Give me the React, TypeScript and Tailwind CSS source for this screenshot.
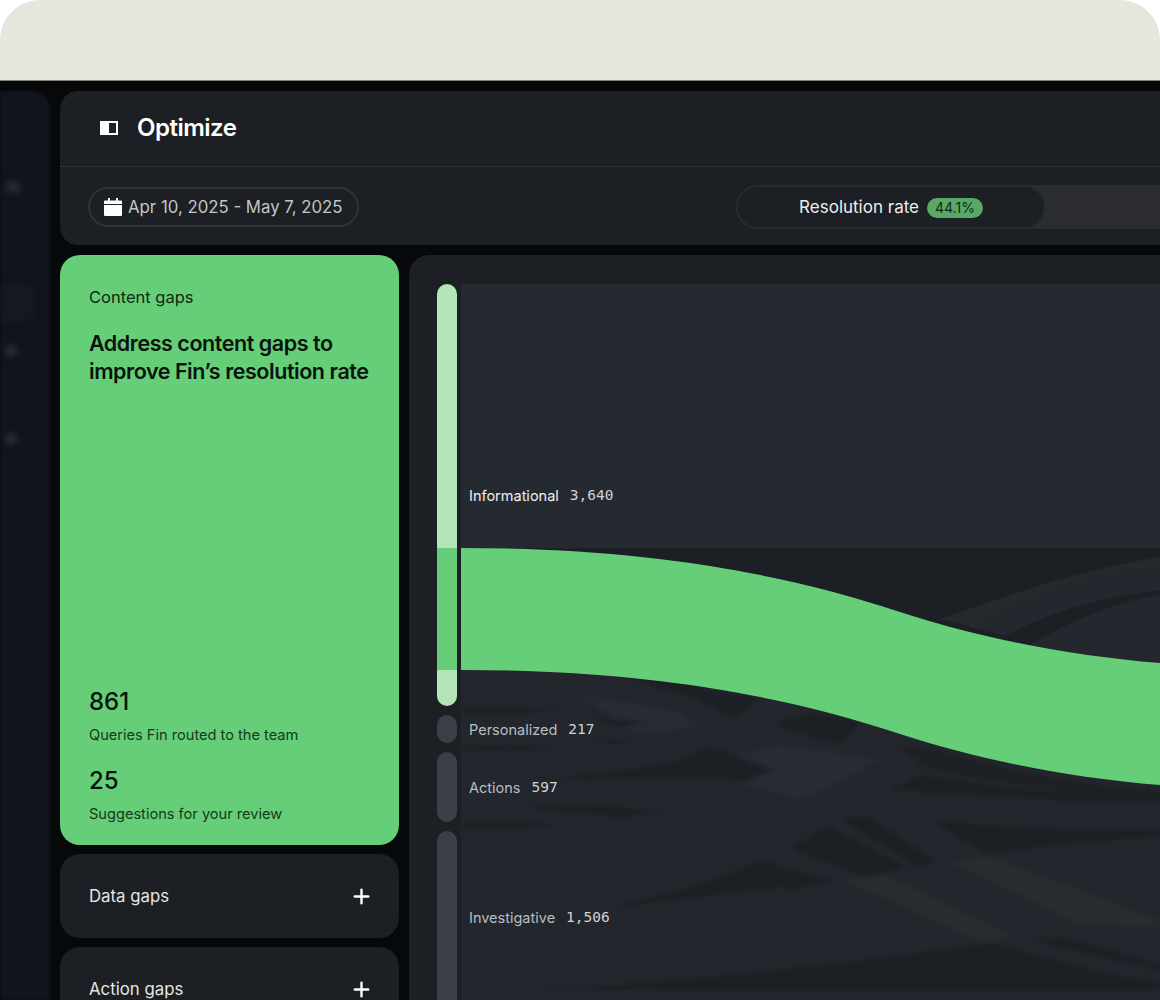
import React from 'react';
import { Plus } from 'lucide-react';

const sans = "font-['Inter','Noto_Sans',sans-serif]";
const mono = "font-['DejaVu_Sans_Mono','Liberation_Mono',monospace]";

// dark gaps between the sankey ribbons, page coordinates
const darkShapes = [
  'M633 680 L712 680 L700 690 L760 698 L735 717 L690 697 Z',
  'M774 724 L812 713 L861 722 L838 745 Z',
  'M537 780 C590 776 640 768 673 763 L710 747 L773 770 L745 781 L700 776 C650 778 590 780 537 780 Z',
  'M517 806 L600 806 L663 812 L625 817 L570 812 Z',
  'M463 707 L563 709 L520 713 L463 713 Z',
  'M463 745 L560 747 L520 751 L463 750 Z',
  'M463 822 L563 824 L510 829 L463 830 Z',
  'M590 718 L650 722 L620 726 Z',
  'M593 738 L633 741 L612 744 Z',
  'M610 907 C670 895 720 880 760 860 L832 883 C760 888 680 900 610 907 Z',
  'M770 873 L833 880 L790 890 Z',
  'M790 848 L830 827 L907 868 L865 877 Z',
  'M840 818 L868 816 L937 862 L920 867 Z',
  'M933 822 C1000 826 1080 832 1160 830 L1160 837 C1090 840 1040 845 990 855 Z',
  'M893 788 L922 775 C960 782 1060 795 1160 800 L1160 803 C1070 802 980 795 893 790 Z',
  'M530 990 C650 985 800 970 993 943 C1050 960 1100 975 1160 982 L1160 990 Z',
  'M1030 940 L1060 937 L1160 964 L1160 970 L1130 964 Z',
];

const faintShapes = [
  { d: 'M843 880 L880 872 L1013 936 L985 944 Z', fill: '#282c2e' },
  { d: 'M950 862 L990 856 L1160 920 L1160 928 L1080 925 Z', fill: '#282c2e' },
  { d: 'M690 768 L780 745 L880 760 L800 800 Z', fill: '#272c34' },
  { d: 'M580 695 L680 712 L700 725 L640 735 Z', fill: '#272c33' },
];

function SankeyChart() {
  return (
    <svg width="699" height="716" viewBox="461 284 699 716" className="block">
      <rect x="461" y="284" width="699" height="716" fill="#252a31" />
      {/* wedge above the green flow and the faint bands that cross it */}
      <path d="M461 548 H1160 V700 H461 Z" fill="#1c1f23" />
      <path d="M940 619 C1020 590 1090 568 1160 557 V567 C1090 575 1040 592 975 628 Z" fill="#25292c" />
      <path d="M975 628 C1040 592 1090 575 1160 567 V590 C1100 597 1050 612 1005 636 Z" fill="#24282e" />
      <path d="M1030 645 C1070 622 1110 603 1160 595 V700 H1030 Z" fill="#24282e" />
      <path d="M461 660 H1160 V1000 H461 Z" fill="#23272d" />
      <g filter="url(#soft)">
        {faintShapes.map((s) => (
          <path key={s.d} d={s.d} fill={s.fill} />
        ))}
        {darkShapes.map((d) => (
          <path key={d} d={d} fill="#1c1f23" />
        ))}
        <path d="M900 745 L943 752 C1000 770 1080 785 1160 790 V800 C1060 792 980 780 925 768 Z" fill="#1d2024" />
      </g>
      <path
        d="M461 548 C640 548 780 572 900 612 C980 638 1070 656 1160 663 V785 C1070 778 980 760 900 734 C780 694 640 670 461 670 Z"
        fill="#66ce79"
      />
      <defs>
        <filter id="soft" x="-5%" y="-5%" width="110%" height="110%" colorInterpolationFilters="sRGB">
          <feGaussianBlur stdDeviation="2" />
        </filter>
      </defs>
    </svg>
  );
}

function ChartLabel({ top, name, value, bright }: { top: string; name: string; value: string; bright?: boolean }) {
  return (
    <div className={`absolute left-2 flex items-center gap-[11px] ${top}`}>
      <span className={`${sans} text-[14.5px] leading-5 ${bright ? 'text-[#eef0f0]' : 'text-[#b9bdc0]'}`}>{name}</span>
      <span className={`${mono} text-[14.5px] leading-5 -translate-y-px text-[#d0d3d4]`}>{value}</span>
    </div>
  );
}

function GapRow({ label, className }: { label: string; className: string }) {
  return (
    <div className={`flex items-center justify-between rounded-[20px] bg-[#1c1f23] pl-[29px] pr-[26px] ${className}`}>
      <span className={`${sans} pt-[2px] text-[16.8px] text-[#e4e6e6]`}>{label}</span>
      <Plus size={23} strokeWidth={2.5} className="text-white" />
    </div>
  );
}

export default function App() {
  return (
    <div className={`${sans} flex h-[1000px] w-[1160px] flex-col overflow-hidden bg-white`}>
      <div className="h-20 shrink-0 rounded-t-[40px] bg-[#e6e5de]" />
      <div className="flex flex-1 gap-[10px] overflow-hidden border-t border-[#85857f] bg-[#060809] pt-[10px]">
        {/* Sidebar, out of focus in the picture */}
        <div className="flex w-[50px] shrink-0 flex-col rounded-tr-[18px] bg-[#10141c] blur-[1px]">
          <div className="ml-[5px] mt-[90px] h-3 w-4 rounded-full bg-[#262a30] blur-[3px]" />
          <div className="mt-[92px] h-[36px] w-[34px] rounded-r-lg bg-[#151922] blur-[3px]" />
          <div className="ml-[5px] mt-[24px] h-3 w-3 rounded-full bg-[#2a2d32] blur-[3px]" />
          <div className="ml-[5px] mt-[76px] h-3 w-3 rounded-full bg-[#2a2d32] blur-[3px]" />
        </div>

        <div className="flex w-[1200px] shrink-0 flex-col gap-[10px]">
          {/* Header */}
          <div className="h-[154px] shrink-0 overflow-hidden rounded-[18px] bg-[#1c1f23]">
            <div className="flex h-[76px] items-center gap-[20px] border-b border-dotted border-[#3a3e42] pb-[2px] pl-[40px]">
              <svg width="18" height="16" viewBox="0 0 18 16" className="mt-[1px]">
                <path d="M0 1h18v14H0z" fill="#fff" />
                <path d="M9 3h7v10H9z" fill="#1c1f23" />
              </svg>
              <h1 className="-ml-[1px] text-[24px] font-semibold leading-8 tracking-[-0.5px] text-white">Optimize</h1>
            </div>
            <div className="flex h-[78px] items-center pl-[28px] pt-[2px]">
              <div className="flex h-10 w-[271px] shrink-0 items-center gap-[6px] rounded-full border-2 border-[#2f3338] pl-[14px]">
                <svg width="18" height="18" viewBox="0 0 18 18">
                  <path d="M0 3.5a1 1 0 0 1 1-1h3V0h2v2.5h6V0h2v2.5h3a1 1 0 0 1 1 1V6H0zM0 7h18v10a1 1 0 0 1-1 1H1a1 1 0 0 1-1-1z" fill="#fff" />
                </svg>
                <span className="whitespace-nowrap pt-[2px] text-[16.8px] text-[#c3c6c8]">Apr 10, 2025 - May 7, 2025</span>
              </div>
              <div className="ml-[377px] flex h-[44px] w-[700px] shrink-0 rounded-full bg-[#2a2c31]">
                <div className="flex h-full w-[310px] items-center justify-center gap-[8px] rounded-full border-2 border-[#282b30] bg-[#1c1f23] pt-[1px]">
                  <span className="text-[17px] text-[#eceeee]">Resolution rate</span>
                  <span className="rounded-full bg-[#5aa866] px-[8px] text-[14px] leading-5 text-[#0d2a14]">44.1%</span>
                </div>
              </div>
            </div>
          </div>

          <div className="flex min-h-0 flex-1 gap-[10px]">
            {/* Gap cards */}
            <div className="flex w-[339px] shrink-0 flex-col gap-[9px]">
              <div className="flex h-[590px] shrink-0 flex-col justify-between rounded-[20px] bg-[#66ce79] px-[29px] pb-[21px] pt-[30px]">
                <div>
                  <p className="text-[16.5px] leading-6 text-[#0d2a14]">Content gaps</p>
                  <h2 className="mt-[20px] text-[21.5px] font-semibold leading-[28px] tracking-[-0.45px] text-[#08140b]">
                    Address content gaps to improve Fin’s resolution rate
                  </h2>
                </div>
                <div>
                  <p className="text-[24px] font-medium leading-8 text-[#08140b]">861</p>
                  <p className="mt-[7px] text-[14.6px] leading-5 text-[#123a1c]">Queries Fin routed to the team</p>
                  <p className="mt-[20px] text-[24px] font-medium leading-8 text-[#08140b]">25</p>
                  <p className="mt-[7px] text-[14.6px] leading-5 text-[#123a1c]">Suggestions for your review</p>
                </div>
              </div>
              <GapRow label="Data gaps" className="h-[84px] shrink-0" />
              <GapRow label="Action gaps" className="h-[84px] shrink-0" />
            </div>

            {/* Sankey panel */}
            <div className="flex min-w-0 flex-1 gap-[4px] rounded-tl-[20px] bg-[#1c1f23] pl-[28px] pt-[29px]">
              <div className="flex w-5 shrink-0 flex-col gap-[9px]">
                <div className="flex h-[422px] shrink-0 flex-col overflow-hidden rounded-full">
                  <div className="h-[264px] bg-[#b3e5b8]" />
                  <div className="h-[122px] bg-[#66ce79]" />
                  <div className="h-9 bg-[#b3e5b8]" />
                </div>
                <div className="h-7 shrink-0 rounded-full bg-[#394048]" />
                <div className="h-[70px] shrink-0 rounded-full bg-[#394048]" />
                <div className="h-[300px] shrink-0 rounded-full bg-[#394048]" />
              </div>
              <div className="relative h-[716px] w-[699px] shrink-0">
                <SankeyChart />
                <ChartLabel top="top-[202px]" name="Informational" value="3,640" bright />
                <ChartLabel top="top-[436px]" name="Personalized" value="217" />
                <ChartLabel top="top-[494px]" name="Actions" value="597" />
                <ChartLabel top="top-[624px]" name="Investigative" value="1,506" />
              </div>
            </div>
          </div>
        </div>
      </div>
    </div>
  );
}
